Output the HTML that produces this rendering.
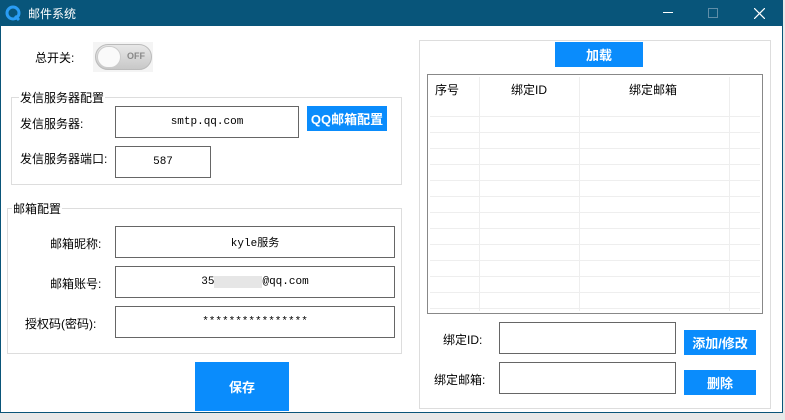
<!DOCTYPE html>
<html><head><meta charset="utf-8"><style>
*{margin:0;padding:0;box-sizing:border-box}
body{width:785px;height:420px;position:relative;overflow:hidden;background:#e8e8e8;font-family:"Liberation Sans","Noto Sans CJK SC",sans-serif;font-size:12px;color:#000}
.a{position:absolute}
.win{left:0;top:0;width:783px;height:413px;background:#fff;border:1px solid #0a5579;border-top:none}
.title{left:0;top:0;width:783px;height:26px;background:#08557a;color:#fff}
.inp{position:absolute;border:1px solid #666;background:#fff;text-align:center;font-family:"Liberation Mono","Noto Sans CJK SC",monospace;font-size:11px;display:flex;align-items:center;justify-content:center}
.btn{position:absolute;background:#0a8cfc;color:#fff;font-weight:bold;display:flex;align-items:center;justify-content:center;font-size:13px}
.grp{position:absolute;border:1px solid #ddd}
.lg{position:absolute;background:#fff;padding:0 1px;font-size:12px}
.lbl{position:absolute;font-size:12px;white-space:nowrap}
.vl{position:absolute;top:2px;bottom:2px;width:1px;background:#eee}
.hl{position:absolute;left:2px;right:2px;height:1px;background:#eee}
</style></head><body>
<div class="a win"></div>
<div class="a title">
 <svg class="a" style="left:5px;top:5px" width="16" height="16" viewBox="0 0 16 16"><circle cx="8" cy="8" r="6" fill="none" stroke="#2a9df4" stroke-width="3"/><path d="M10 11 L14 15" stroke="#2a9df4" stroke-width="3"/></svg>
 <div class="a" style="left:28px;top:5px;font-size:12px">邮件系统</div>
 <div class="a" style="left:663px;top:12px;width:10px;height:1px;background:#fff"></div>
 <div class="a" style="left:708px;top:8px;width:10px;height:10px;border:1px solid #5f8ea8"></div>
 <svg class="a" style="left:754px;top:8px" width="11" height="11"><path d="M0 0L11 11M11 0L0 11" stroke="#fff" stroke-width="1.2"/></svg>
</div>

<div class="lbl" style="left:35px;top:49px">总开关:</div>
<div class="a" style="left:93px;top:42px;width:60px;height:30px;background:#f4f4f4"></div>
<div class="a" style="left:95px;top:44px;width:57px;height:26px;border-radius:13px;background:linear-gradient(#e8e8e8,#c8c8c8);border:1px solid #bbb"></div>
<div class="a" style="left:97px;top:46px;width:24px;height:22px;border-radius:11px;background:#fafafa;border:1px solid #ccc"></div>
<div class="a" style="left:127px;top:51px;font-size:9px;color:#888;font-weight:bold">OFF</div>

<div class="grp" style="left:11px;top:97px;width:391px;height:88px"></div>
<div class="lg" style="left:19px;top:89px">发信服务器配置</div>
<div class="lbl" style="left:20px;top:115px">发信服务器:</div>
<div class="inp" style="left:115px;top:106px;width:184px;height:32px">smtp.qq.com</div>
<div class="btn" style="left:307px;top:106px;width:80px;height:25px">QQ邮箱配置</div>
<div class="lbl" style="left:20px;top:150px">发信服务器端口:</div>
<div class="inp" style="left:115px;top:146px;width:96px;height:32px">587</div>

<div class="grp" style="left:7px;top:208px;width:395px;height:146px"></div>
<div class="lg" style="left:12px;top:200px">邮箱配置</div>
<div class="lbl" style="left:50px;top:235px">邮箱昵称:</div>
<div class="inp" style="left:115px;top:226px;width:280px;height:32px">kyle服务</div>
<div class="lbl" style="left:50px;top:275px">邮箱账号:</div>
<div class="inp" style="left:115px;top:266px;width:280px;height:32px">35<span style="display:inline-block;width:48px;height:12px;background:#e6e6e6"></span>@qq.com</div>
<div class="lbl" style="left:25px;top:315px">授权码(密码):</div>
<div class="inp" style="left:115px;top:306px;width:280px;height:32px">****************</div>
<div class="btn" style="left:195px;top:362px;width:94px;height:49px">保存</div>

<div class="grp" style="left:419px;top:40px;width:352px;height:369px"></div>
<div class="btn" style="left:555px;top:42px;width:88px;height:25px">加载</div>
<div class="a" style="left:427px;top:74px;width:336px;height:240px;border:1px solid #888;background:#fff">
 <div class="lbl" style="left:7px;top:6px">序号</div>
 <div class="lbl" style="left:83px;top:6px">绑定ID</div>
 <div class="lbl" style="left:201px;top:6px">绑定邮箱</div>
 <div class="vl" style="left:51px"></div><div class="vl" style="left:151px"></div><div class="vl" style="left:301px"></div>
 <div class="hl" style="top:41px"></div><div class="hl" style="top:57px"></div><div class="hl" style="top:73px"></div><div class="hl" style="top:89px"></div><div class="hl" style="top:105px"></div><div class="hl" style="top:121px"></div><div class="hl" style="top:137px"></div><div class="hl" style="top:153px"></div><div class="hl" style="top:169px"></div><div class="hl" style="top:185px"></div><div class="hl" style="top:201px"></div><div class="hl" style="top:217px"></div><div class="hl" style="top:233px"></div>
</div>
<div class="lbl" style="left:443px;top:331px">绑定ID:</div>
<div class="inp" style="left:499px;top:322px;width:177px;height:32px"></div>
<div class="btn" style="left:684px;top:330px;width:72px;height:25px">添加/修改</div>
<div class="lbl" style="left:434px;top:371px">绑定邮箱:</div>
<div class="inp" style="left:499px;top:362px;width:177px;height:32px"></div>
<div class="btn" style="left:684px;top:370px;width:72px;height:25px">删除</div>
</body></html>
